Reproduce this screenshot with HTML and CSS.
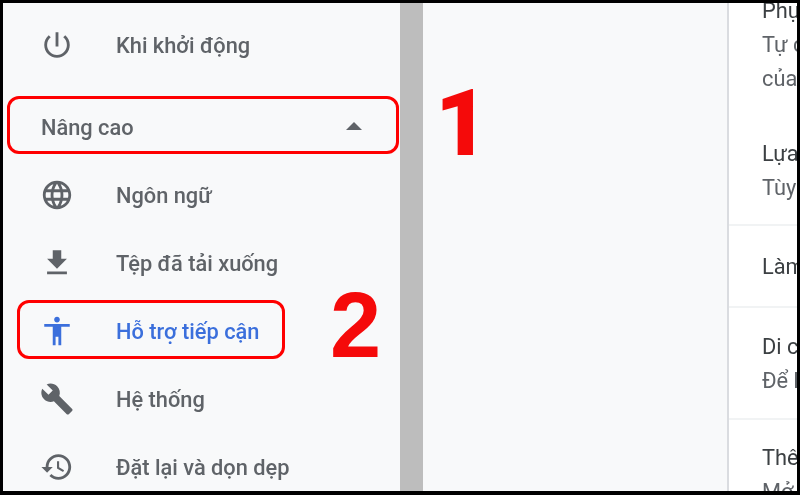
FILE: index.html
```html
<!DOCTYPE html>
<html lang="vi">
<head>
<meta charset="utf-8">
<title>Cài đặt</title>
<link rel="stylesheet" href="styles.css">
</head>
<body>
<div class="frame">
  <nav class="sidebar">
    <a class="item">
      <svg class="icon" viewBox="0 0 24 24"><path d="M13 3h-2v10h2V3zm4.83 2.17l-1.42 1.42C17.99 7.86 19 9.81 19 12c0 3.87-3.13 7-7 7s-7-3.13-7-7c0-2.19 1.01-4.14 2.58-5.42L6.17 5.17C4.23 6.82 3 9.26 3 12c0 4.97 4.03 9 9 9s9-4.03 9-9c0-2.74-1.23-5.18-3.17-6.83z"/></svg>
      <span>Khi khởi động</span>
    </a>
    <div class="section">
      <span>Nâng cao</span>
      <span class="caret"></span>
    </div>
    <a class="item">
      <svg class="icon" viewBox="0 0 24 24"><path d="M11.99 2C6.47 2 2 6.48 2 12s4.47 10 9.99 10C17.52 22 22 17.52 22 12S17.52 2 11.99 2zm6.93 6h-2.95c-.32-1.25-.78-2.45-1.38-3.56 1.84.63 3.37 1.91 4.33 3.56zM12 4.04c.83 1.2 1.48 2.53 1.91 3.96h-3.82c.43-1.43 1.08-2.76 1.91-3.96zM4.26 14C4.1 13.36 4 12.69 4 12s.1-1.36.26-2h3.38c-.08.66-.14 1.32-.14 2 0 .68.06 1.34.14 2H4.26zm.82 2h2.95c.32 1.25.78 2.45 1.38 3.56-1.84-.63-3.37-1.9-4.33-3.56zm2.95-8H5.08c.96-1.66 2.49-2.93 4.33-3.56C8.81 5.55 8.35 6.75 8.03 8zM12 19.96c-.83-1.2-1.48-2.53-1.91-3.96h3.82c-.43 1.43-1.08 2.76-1.91 3.96zM14.34 14H9.66c-.09-.66-.16-1.32-.16-2 0-.68.07-1.35.16-2h4.68c.09.65.16 1.32.16 2 0 .68-.07 1.34-.16 2zm.25 5.56c.6-1.11 1.06-2.31 1.38-3.56h2.95c-.96 1.65-2.49 2.93-4.33 3.56zM16.36 14c.08-.66.14-1.32.14-2 0-.68-.06-1.34-.14-2h3.38c.16.64.26 1.31.26 2s-.1 1.36-.26 2h-3.38z"/></svg>
      <span>Ngôn ngữ</span>
    </a>
    <a class="item">
      <svg class="icon" viewBox="0 0 24 24"><path d="M19 9h-4V3H9v6H5l7 7 7-7zM5 18v2h14v-2H5z"/></svg>
      <span>Tệp đã tải xuống</span>
    </a>
    <a class="item active">
      <svg class="icon" viewBox="0 0 24 24"><path d="M12 2c1.1 0 2 .9 2 2s-.9 2-2 2-2-.9-2-2 .9-2 2-2zm9 7h-6v13h-2v-6h-2v6H9V9H3V7h18v2z"/></svg>
      <span>Hỗ trợ tiếp cận</span>
    </a>
    <a class="item">
      <svg class="icon" viewBox="0 0 24 24"><path d="M22.7 19l-9.1-9.1c.9-2.3.4-5-1.5-6.9-2-2-5-2.4-7.4-1.3L9 6 6 9 1.6 4.7C.4 7.1.9 10.1 2.9 12.1c1.9 1.9 4.6 2.4 6.9 1.5l9.1 9.1c.4.4 1 .4 1.4 0l2.3-2.3c.5-.4.5-1.1.1-1.4z"/></svg>
      <span>Hệ thống</span>
    </a>
    <a class="item">
      <svg class="icon" viewBox="0 0 24 24"><path d="M13 3c-4.97 0-9 4.03-9 9H1l3.89 3.89.07.14L9 12H6c0-3.87 3.13-7 7-7s7 3.13 7 7-3.13 7-7 7c-1.93 0-3.68-.79-4.94-2.06l-1.42 1.42C8.27 19.99 10.51 21 13 21c4.97 0 9-4.03 9-9s-4.03-9-9-9zm-1 5v5l4.28 2.54.72-1.21-3.5-2.08V8H12z"/></svg>
      <span>Đặt lại và dọn dẹp</span>
    </a>
  </nav>
  <div class="scrollbar"></div>
  <main class="content">
    <div class="card">
      <div class="row row-first">
        <div class="title">Phụ</div>
        <div class="sub">Tự c</div>
        <div class="sub">của</div>
        <div class="title title-gap">Lựa</div>
        <div class="sub">Tùy</div>
      </div>
      <div class="row row-single"><div class="title">Làm</div></div>
      <div class="row row-double">
        <div class="title">Di c</div>
        <div class="sub">Để h</div>
      </div>
      <div class="row row-last">
        <div class="title">Thê</div>
        <div class="sub">Mở</div>
      </div>
    </div>
  </main>
  <div class="mark mark-section"></div>
  <div class="mark mark-item"></div>
  <div class="num num-1">1</div>
  <div class="num num-2">2</div>
</div>
</body>
</html>
```

FILE: styles.css
```css
* { box-sizing: border-box; }
html, body { margin: 0; padding: 0; height: 100%; background: #000; overflow: hidden; }
.frame {
  position: relative;
  width: 800px;
  height: 495px;
  border-style: solid;
  border-color: #000;
  border-width: 3px 3px 4px 3px;
  display: flex;
  overflow: hidden;
  background: #f8f9fa;
  font-family: Roboto, "Noto Sans", sans-serif;
}
.sidebar {
  width: 397px;
  flex: none;
  padding-top: 8px;
  background: #f8f9fa;
  font-size: 21.8px;
  font-weight: 500;
  color: #5f6368;
  filter: blur(0.4px);
}
.item {
  display: flex;
  align-items: center;
  height: 68px;
  padding-left: 37px;
}
.icon {
  width: 34px;
  height: 34px;
  flex: none;
  margin-right: 42px;
  fill: currentColor;
}
.active { color: #3b6fdc; }
.section {
  display: flex;
  align-items: center;
  justify-content: space-between;
  height: 68px;
  margin-top: 14px;
  padding: 0 38px 0 38px;
}
.caret {
  width: 0;
  height: 0;
  margin-top: -2px;
  border-left: 8px solid transparent;
  border-right: 8px solid transparent;
  border-bottom: 8px solid #5f6368;
}
.scrollbar { width: 23px; flex: none; background: #bdbdbd; }
.content { flex: 1; min-width: 0; padding-left: 304px; }
.card {
  height: 100%;
  background: #fff;
  border-left: 2px solid #dadce0;
  padding-left: 33px;
  font-size: 21.8px;
  line-height: 34px;
  white-space: nowrap;
  overflow: hidden;
  filter: blur(0.4px);
}
.row { border-bottom: 2px solid #f1f3f4; margin-left: -33px; padding-left: 33px; }
.row-first { margin-top: -9px; height: 232px; }
.title-gap { margin-top: 41px; }
.row-single { height: 82px; padding-top: 24px; }
.row-double { height: 112px; padding-top: 22px; }
.row-last { border-bottom: 0; padding-top: 21px; }
.title { color: #3c4043; }
.sub { color: #5f6368; }
.mark {
  position: absolute;
  border: 3px solid #f00;
  border-radius: 12px;
}
.mark-section { left: 4px; top: 93px; width: 392px; height: 58px; }
.mark-item { left: 14px; top: 297px; width: 268px; height: 59px; }
.num {
  position: absolute;
  color: #f50a0a;
}
.num-1 {
  left: 432px;
  top: 74px;
  font-family: Roboto, sans-serif;
  font-weight: 900;
  font-size: 93px;
  line-height: 93px;
}
.num-2 {
  left: 327px;
  top: 276px;
  font-family: "Liberation Sans", Arial, sans-serif;
  font-weight: 700;
  font-size: 92px;
  line-height: 92px;
}
```
